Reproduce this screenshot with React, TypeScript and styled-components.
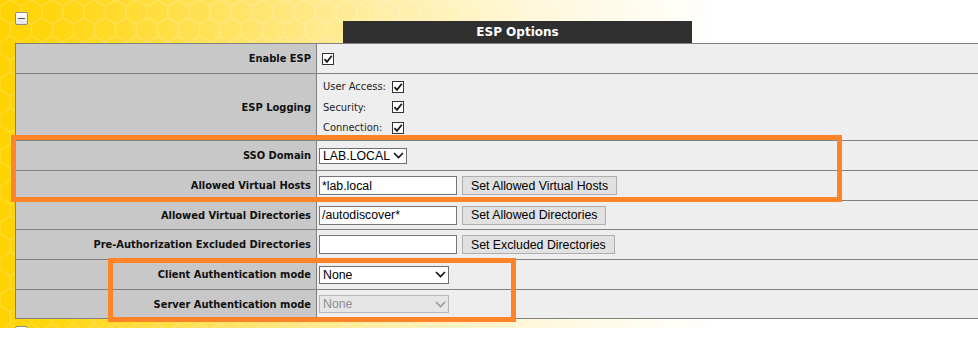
import React from 'react';
import styled, { createGlobalStyle } from 'styled-components';

const GlobalStyle = createGlobalStyle`
  html, body {
    margin: 0;
    padding: 0;
    overflow: hidden;
    background: #ffffff;
  }
`;

const labelFont = `'DejaVu Sans Condensed', 'DejaVu Sans', Tahoma, sans-serif`;
const formFont = `'Liberation Sans', Arial, sans-serif`;

const Page = styled.div`
  position: relative;
  height: 328px;
  overflow: hidden;
  box-sizing: border-box;
  padding: 12px 0 0 15px;
  background: linear-gradient(
    90deg,
    #ffd200 0px,
    #ffd717 70px,
    #ffe25e 220px,
    #ffeea6 380px,
    #fff8dc 540px,
    #ffffff 720px
  );
`;

const Honeycomb = styled.svg`
  position: absolute;
  inset: 0;
  width: 100%;
  height: 100%;
  pointer-events: none;
`;

const Content = styled.div`
  position: relative;
`;

const TopBar = styled.div`
  width: 1005px;
  height: 31px;
  display: grid;
  grid-template-columns: 1fr 349px 1fr;
`;

const CollapseButton = styled.div`
  width: 13px;
  height: 13px;
  box-sizing: border-box;
  border: 1px solid #8c8c8c;
  border-radius: 2px;
  background: linear-gradient(#ffffff, #e4e4e4);
  display: flex;
  align-items: center;
  justify-content: center;
  align-self: start;

  &::after {
    content: '';
    width: 7px;
    height: 1px;
    background: #555;
  }
`;

const Title = styled.div`
  align-self: end;
  height: 22px;
  background: #2f2f2f;
  color: #ffffff;
  font: bold 12px 'DejaVu Sans', Tahoma, sans-serif;
  display: flex;
  align-items: center;
  justify-content: center;
`;

const Table = styled.div`
  width: 1005px;
  border: 1px solid #808080;
`;

const Row = styled.div<{ $h: number }>`
  display: grid;
  grid-template-columns: 301px 1fr;
  height: ${p => p.$h}px;

  & + & {
    border-top: 1px solid #808080;
  }
`;

const Label = styled.div`
  background: #c8c8c8;
  border-right: 1px solid #808080;
  display: flex;
  align-items: center;
  justify-content: flex-end;
  padding-right: 5px;
  font: bold 11px ${labelFont};
  color: #111;
`;

const Value = styled.div`
  background: #eeeeee;
  display: flex;
  align-items: center;
  gap: 5px;
  padding-left: 2px;
`;

const CheckBox = styled.span`
  width: 12px;
  height: 12px;
  box-sizing: border-box;
  border: 1px solid #333;
  background: #fff;
  display: inline-flex;
  align-items: center;
  justify-content: center;
  margin-left: 3px;
`;

const LogGrid = styled.div`
  margin-left: 4px;
  display: grid;
  grid-template-columns: 69px 12px;
  grid-auto-rows: 20.5px;
  align-items: center;
  font: 11px ${labelFont};
  color: #222;

  ${CheckBox} {
    margin-left: 0;
  }
`;

const TextInput = styled.div`
  width: 138px;
  height: 19px;
  box-sizing: border-box;
  border: 1px solid #767676;
  background: #fff;
  font: 12.3px ${formFont};
  color: #000;
  padding: 0 2px;
  display: flex;
  align-items: center;
`;

const Button = styled.div`
  height: 19px;
  box-sizing: border-box;
  border: 1px solid #adadad;
  background: #e1e1e1;
  font: 12.3px ${formFont};
  color: #000;
  padding: 0 8px;
  display: flex;
  align-items: center;
  white-space: nowrap;
`;

const Select = styled.div<{ $w: number; $h: number; $disabled?: boolean }>`
  width: ${p => p.$w}px;
  height: ${p => p.$h}px;
  box-sizing: border-box;
  border: 1px solid ${p => (p.$disabled ? '#b8b8b8' : '#6f6f6f')};
  background: ${p => (p.$disabled ? '#e6e6e6' : '#ffffff')};
  color: ${p => (p.$disabled ? '#8d8d8d' : '#000')};
  font: 12.3px ${formFont};
  padding: 0 2px 0 3px;
  display: flex;
  align-items: center;
  justify-content: space-between;
`;

const Highlight = styled.div<{ $x: number; $y: number; $w: number; $h: number }>`
  position: absolute;
  left: ${p => p.$x}px;
  top: ${p => p.$y}px;
  width: ${p => p.$w}px;
  height: ${p => p.$h}px;
  box-sizing: border-box;
  border: 5px solid #ff8429;
  pointer-events: none;
`;

const NextSection = styled(CollapseButton)`
  margin-top: 7px;
`;

const Check = () => (
  <CheckBox>
    <svg width="10" height="10" viewBox="0 0 10 10">
      <path d="M1.5 5.2 L4 7.8 L8.8 1.8" fill="none" stroke="#1a1a1a" strokeWidth="1.8" />
    </svg>
  </CheckBox>
);

const Chevron = ({ color = '#111' }: { color?: string }) => (
  <svg width="11" height="7" viewBox="0 0 11 7">
    <path d="M1 1 L5.5 5.5 L10 1" fill="none" stroke={color} strokeWidth="1.6" />
  </svg>
);

const rows = [
  { label: 'Allowed Virtual Hosts', value: '*lab.local', button: 'Set Allowed Virtual Hosts', h: 29 },
  { label: 'Allowed Virtual Directories', value: '/autodiscover*', button: 'Set Allowed Directories', h: 28 },
  { label: 'Pre-Authorization Excluded Directories', value: '', button: 'Set Excluded Directories', h: 29 },
];

const App: React.FC = () => {
  return (
    <Page>
      <GlobalStyle />
      <Honeycomb>
        <defs>
          <pattern id="hex" width="21" height="36" patternUnits="userSpaceOnUse">
            <path
              d="M10.5 0 L21 6 L21 18 L10.5 24 L0 18 L0 6 Z M10.5 24 L10.5 36"
              fill="none"
              stroke="#ffffff"
              strokeOpacity="0.18"
              strokeWidth="1.5"
            />
          </pattern>
        </defs>
        <rect width="100%" height="100%" fill="url(#hex)" />
      </Honeycomb>
      <Content>
        <TopBar>
          <CollapseButton />
          <Title>ESP Options</Title>
        </TopBar>
        <Table>
          <Row $h={29}>
            <Label>Enable ESP</Label>
            <Value>
              <Check />
            </Value>
          </Row>
          <Row $h={66}>
            <Label>ESP Logging</Label>
            <Value>
              <LogGrid>
                <span>User Access:</span>
                <Check />
                <span>Security:</span>
                <Check />
                <span>Connection:</span>
                <Check />
              </LogGrid>
            </Value>
          </Row>
          <Row $h={29}>
            <Label>SSO Domain</Label>
            <Value>
              <Select $w={88} $h={16}>
                <span>LAB.LOCAL</span>
                <Chevron />
              </Select>
            </Value>
          </Row>
          {rows.map(r => (
            <Row $h={r.h} key={r.label}>
              <Label>{r.label}</Label>
              <Value>
                <TextInput>{r.value}</TextInput>
                <Button>{r.button}</Button>
              </Value>
            </Row>
          ))}
          <Row $h={29}>
            <Label>Client Authentication mode</Label>
            <Value>
              <Select $w={130} $h={18}>
                <span>None</span>
                <Chevron />
              </Select>
            </Value>
          </Row>
          <Row $h={28}>
            <Label>Server Authentication mode</Label>
            <Value>
              <Select $w={130} $h={18} $disabled>
                <span>None</span>
                <Chevron color="#9a9a9a" />
              </Select>
            </Value>
          </Row>
        </Table>
        <NextSection />
      </Content>
      <Highlight $x={11} $y={135} $w={831} $h={67} />
      <Highlight $x={108} $y={258} $w={408} $h={64} />
    </Page>
  );
};

export default App;
